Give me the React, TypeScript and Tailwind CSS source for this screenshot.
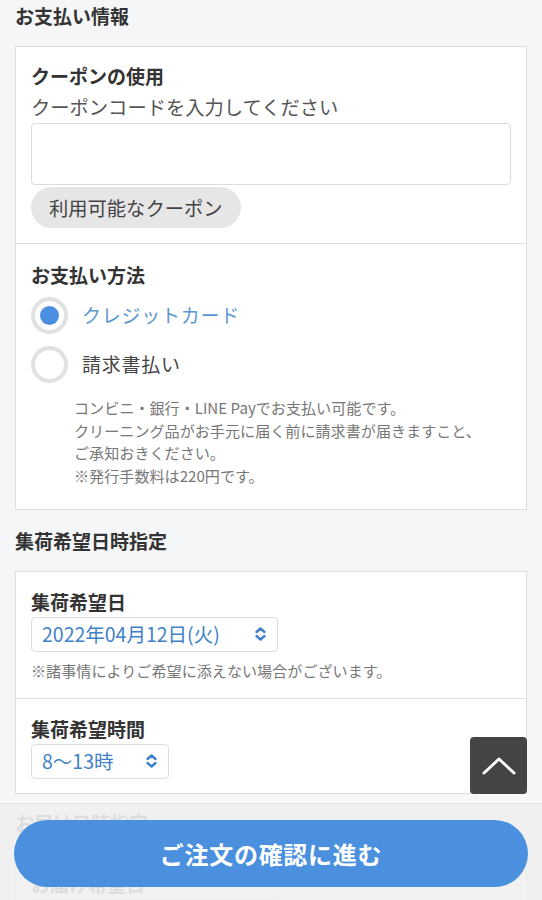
import React from "react";

const font = { fontFamily: '"Noto Sans CJK JP", "Noto Sans", sans-serif' };

function Chevrons() {
  return (
    <svg width="13" height="16" viewBox="0 0 13 16" fill="none" stroke="currentColor" strokeWidth="2.4" strokeLinecap="round" strokeLinejoin="round">
      <path d="M2.5 6 6.5 2.5 10.5 6" />
      <path d="M2.5 10 6.5 13.5 10.5 10" />
    </svg>
  );
}

function Radio({ checked, label }: { checked: boolean; label: string }) {
  return (
    <div className="flex h-[40px] items-center">
      <div className="flex h-[37px] w-[37px] items-center justify-center rounded-full border-[4px] border-[#e1e1e1] bg-white">
        {checked && <div className="h-[19px] w-[19px] rounded-full bg-[#4a8fe2]" />}
      </div>
      <span className={`ml-[14px] text-[19px] leading-[26px] tracking-[0.04em] ${checked ? "text-[#5a97d3]" : "text-[#444]"}`}>
        {label}
      </span>
    </div>
  );
}

function Select({ value, width }: { value: string; width: string }) {
  return (
    <div className={`mt-[2px] flex h-[35px] ${width} items-center justify-between rounded-[4px] border border-[#dcdcdc] bg-white pl-[10px] pr-[10px] text-[#3f82c9]`}>
      <span className="text-[19.5px] leading-[26px]">{value}</span>
      <Chevrons />
    </div>
  );
}

export default function App() {
  return (
    <div className="min-h-screen bg-[#f5f6f8] text-[#333]" style={font}>
      <div className="px-[15px] pb-[140px]">
        <h2 className="pt-[4px] pb-[18px] text-[19px] font-bold leading-[24px]">お支払い情報</h2>

        <div className="border border-[#dddddd] bg-white">
          <div className="border-b border-[#dddddd] px-[15px] pt-[16px] pb-[15px]">
            <p className="text-[19px] font-bold leading-[26px]">クーポンの使用</p>
            <p className="mt-[5px] text-[19.3px] leading-[26px] text-[#555]">クーポンコードを入力してください</p>
            <div className="mt-[3px] h-[62px] rounded-[4px] border border-[#dcdcdc] bg-white" />
            <button className="mt-[2px] h-[41px] rounded-full bg-[#e6e6e6] px-[18px] text-[19.3px] leading-[26px] text-[#444]">
              利用可能なクーポン
            </button>
          </div>

          <div className="px-[15px] pt-[18px] pb-[22px]">
            <p className="text-[19px] font-bold leading-[26px]">お支払い方法</p>
            <div className="mt-[7px]">
              <Radio checked label="クレジットカード" />
            </div>
            <div className="mt-[9px]">
              <Radio checked={false} label="請求書払い" />
            </div>
            <div className="mt-[12px] pl-[43px] text-[15.1px] leading-[22.7px] text-[#777]">
              <p>コンビニ・銀行・LINE Payでお支払い可能です。</p>
              <p>クリーニング品がお手元に届く前に請求書が届きますこと、</p>
              <p>ご承知おきください。</p>
              <p>※発行手数料は220円です。</p>
            </div>
          </div>
        </div>

        <h2 className="mt-[19px] mb-[18px] text-[19px] font-bold leading-[24px]">集荷希望日時指定</h2>

        <div className="border border-[#dddddd] bg-white">
          <div className="border-b border-[#dddddd] px-[15px] pt-[17px] pb-[17px]">
            <p className="text-[19px] font-bold leading-[26px]">集荷希望日</p>
            <Select value="2022年04月12日(火)" width="w-[247px]" />
            <p className="mt-[7px] text-[15.1px] leading-[22px] text-[#777]">※諸事情によりご希望に添えない場合がございます。</p>
          </div>
          <div className="px-[15px] pt-[17px] pb-[14px]">
            <p className="text-[19px] font-bold leading-[26px]">集荷希望時間</p>
            <Select value="8〜13時" width="w-[138px]" />
          </div>
        </div>

        <h2 className="mt-[17px] mb-[18px] text-[19px] font-bold leading-[24px]">お届け日時指定</h2>

        <div className="border border-[#dddddd] bg-white">
          <div className="px-[15px] pt-[17px] pb-[17px]">
            <p className="text-[19px] font-bold leading-[26px]">お届け希望日</p>
            <Select value="2022年04月19日(火)" width="w-[247px]" />
          </div>
        </div>
      </div>

      <button className="fixed right-[15px] bottom-[106px] flex h-[57px] w-[57px] items-center justify-center rounded-[4px] bg-[#444]">
        <svg width="34" height="20" viewBox="0 0 34 20" fill="none" stroke="white" strokeWidth="3" strokeLinecap="round" strokeLinejoin="round">
          <path d="M2 17 17 3 32 17" />
        </svg>
      </button>

      <div className="fixed inset-x-0 bottom-0 h-[97px] border-t border-[#e2e2e2] bg-[#f0f0f0]/90 px-[14px] pt-[16px]">
        <button className="flex h-[67px] w-full items-center justify-center rounded-full bg-[#4a90df] text-[24px] font-bold tracking-[0.03em] text-white">
          ご注文の確認に進む
        </button>
      </div>
    </div>
  );
}
